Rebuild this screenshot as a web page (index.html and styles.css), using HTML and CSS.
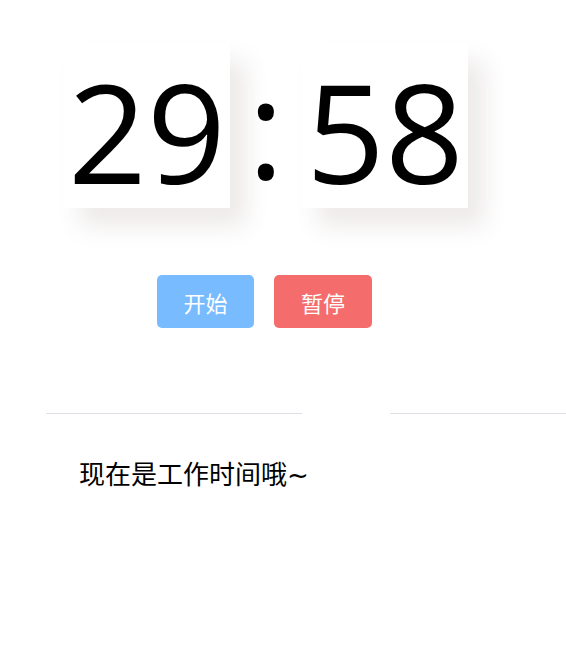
FILE: index.html
```html
<!DOCTYPE html>
<html lang="zh">
<head>
<meta charset="utf-8">
<title>番茄钟</title>
<link rel="stylesheet" href="styles.css">
</head>
<body>
<div class="timer">
  <div class="box">29</div>
  <div class="colon">:</div>
  <div class="box">58</div>
</div>
<div class="actions">
  <button class="btn btn-primary">开始</button>
  <button class="btn btn-danger">暂停</button>
</div>
<div class="divider">
  <span class="line line-left"></span>
  <span class="gap"></span>
  <span class="line line-right"></span>
</div>
<p class="status">现在是工作时间哦~</p>
</body>
</html>
```
FILE: styles.css
```css
html, body {
  margin: 0;
  padding: 0;
  background: #fff;
  overflow: hidden;
}
body {
  font-family: "Open Sans", "Noto Sans CJK SC", sans-serif;
  color: #000;
}
.timer {
  display: flex;
  padding: 43px 0 0 64px;
}
.box {
  width: 166px;
  height: 165px;
  background: #fff;
  box-shadow: 16px 18px 22px rgba(110, 80, 70, 0.12);
  font-size: 138px;
  line-height: 165px;
  text-align: center;
  padding-top: 5px;
  box-sizing: border-box;
  position: relative;
}
.colon {
  width: 72px;
  font-size: 138px;
  line-height: 165px;
  text-align: center;
  position: relative;
  z-index: 1;
}
.actions {
  display: flex;
  gap: 20px;
  padding: 67px 0 0 157px;
}
.btn {
  width: 97px;
  height: 53px;
  border: none;
  border-radius: 5px;
  color: #fff;
  font-family: "Noto Sans CJK SC", sans-serif;
  font-size: 22px;
  padding: 0;
  cursor: pointer;
}
.btn-primary { background: #79bbff; }
.btn-danger { background: #f56c6c; width: 98px; }
.divider {
  display: flex;
  align-items: center;
  padding: 85px 0 0 46px;
  height: 1px;
}
.line {
  height: 1px;
  background: #dcdfe6;
}
.line-left { width: 256px; }
.gap { width: 88px; }
.line-right { flex: 1; }
.status {
  margin: 43px 0 0 79px;
  font-family: "DejaVu Sans", "Noto Sans CJK SC", sans-serif;
  font-size: 26px;
  line-height: 36px;
}
```
